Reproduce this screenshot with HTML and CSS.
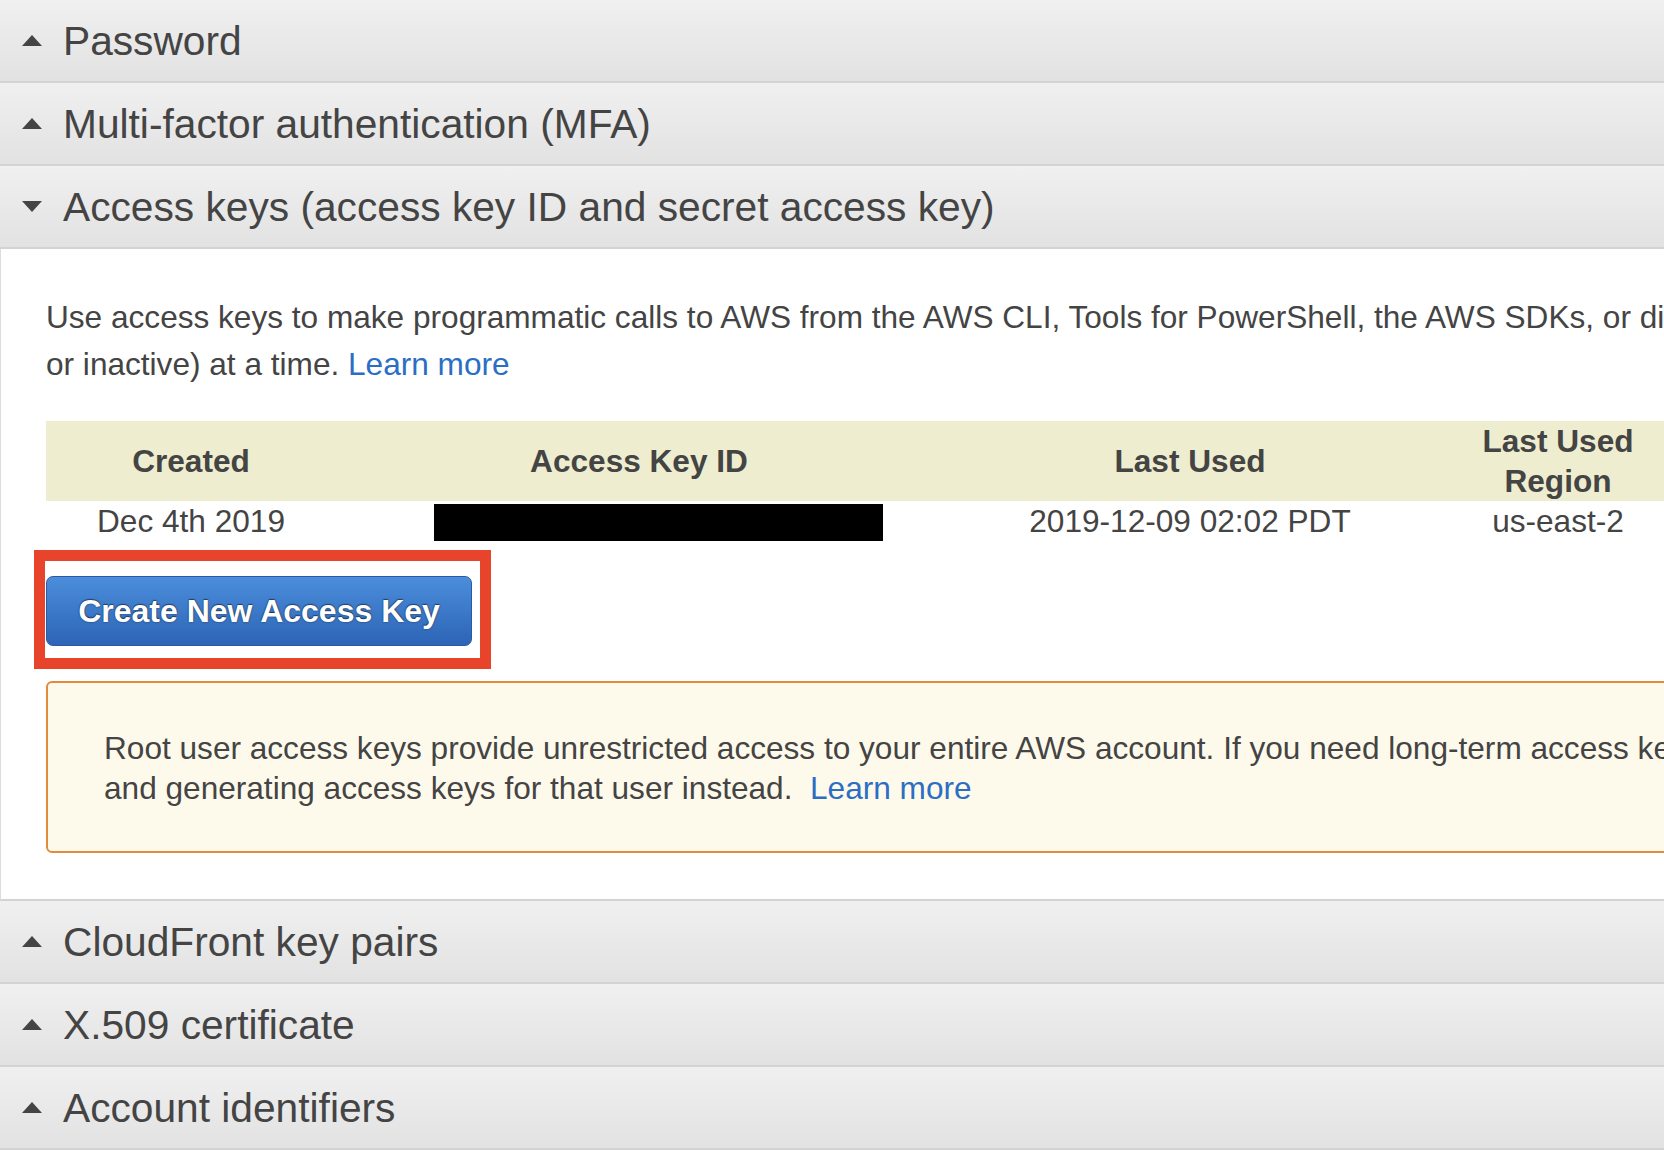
FILE: index.html
```html
<!DOCTYPE html>
<html lang="en">
<head>
<meta charset="utf-8">
<title>Your Security Credentials</title>
<link rel="stylesheet" href="styles.css">
</head>
<body>
<div class="page">
  <div class="section-head"><span class="tri tri-up"></span><span class="head-title">Password</span></div>
  <div class="section-head"><span class="tri tri-up"></span><span class="head-title">Multi-factor authentication (MFA)</span></div>
  <div class="section-head"><span class="tri tri-down"></span><span class="head-title">Access keys (access key ID and secret access key)</span></div>
  <div class="section-body">
    <p class="intro">Use access keys to make programmatic calls to AWS from the AWS CLI, Tools for PowerShell, the AWS SDKs, or direct AWS API calls. You can have a maximum of two access keys (active<br>or inactive) at a time. <a class="link" href="#">Learn more</a></p>
    <table class="keys">
      <colgroup>
        <col class="c1"><col class="c2"><col class="c3"><col class="c4"><col class="c5"><col class="c6">
      </colgroup>
      <thead>
        <tr><th>Created</th><th>Access Key ID</th><th>Last Used</th><th>Last Used Region</th><th>Last Used Service</th><th>Status</th></tr>
      </thead>
      <tbody>
        <tr><td>Dec 4th 2019</td><td class="keycell"><div class="redact"></div></td><td>2019-12-09 02:02 PDT</td><td>us-east-2</td><td>iam</td><td>Active</td></tr>
      </tbody>
    </table>
    <div class="highlight"><button class="btn-primary" type="button">Create New Access Key</button></div>
    <div class="warning">
      <p class="warning-text">Root user access keys provide unrestricted access to your entire AWS account. If you need long-term access keys, we recommend creating a new IAM user with limited permissions<br>and generating access keys for that user instead.&nbsp; <a class="link" href="#">Learn more</a></p>
    </div>
  </div>
  <div class="section-head"><span class="tri tri-up"></span><span class="head-title">CloudFront key pairs</span></div>
  <div class="section-head"><span class="tri tri-up"></span><span class="head-title">X.509 certificate</span></div>
  <div class="section-head"><span class="tri tri-up"></span><span class="head-title">Account identifiers</span></div>
</div>
</body>
</html>
```
FILE: styles.css
```css
html, body {
  margin: 0;
  padding: 0;
  background: #ffffff;
  overflow: hidden;
}
body {
  font-family: "Liberation Sans", Arial, Helvetica, sans-serif;
  color: #444444;
}
.page {
  width: 2300px;
}
.section-head {
  height: 81px;
  border-bottom: 2px solid #d3d3d3;
  background: linear-gradient(#f0f0f0, #e2e2e2);
  display: flex;
  align-items: center;
  padding-left: 22px;
}
.tri {
  width: 0;
  height: 0;
  border-left: 10px solid transparent;
  border-right: 10px solid transparent;
  margin-right: 21px;
}
.tri-up {
  border-bottom: 11px solid #444444;
}
.tri-down {
  border-top: 11px solid #444444;
}
.head-title {
  font-size: 40.7px;
  line-height: 48px;
  color: #444444;
}
.section-body {
  border-left: 1px solid #dddddd;
  border-bottom: 2px solid #d3d3d3;
  padding: 45px 0 46px 45px;
  background: #ffffff;
}
.intro {
  margin: 0;
  font-size: 31.6px;
  line-height: 47px;
  white-space: nowrap;
}
.link {
  color: #2b6ec4;
  text-decoration: none;
}
.keys {
  margin-top: 33px;
  border-collapse: collapse;
  border-spacing: 0;
  table-layout: fixed;
  width: 1900px;
}
.c1 { width: 290px; }
.c2 { width: 606px; }
.c3 { width: 496px; }
.c4 { width: 240px; }
.c5 { width: 160px; }
.c6 { width: 108px; }
.keys th {
  background: #eeedcf;
  font-size: 31.6px;
  font-weight: bold;
  line-height: 40px;
  height: 79px;
  padding: 0;
  text-align: center;
  color: #444444;
  vertical-align: middle;
}
.keys td {
  font-size: 31.6px;
  line-height: 40px;
  padding: 0;
  text-align: center;
  vertical-align: middle;
  color: #444444;
}
.keycell {
  text-align: left;
}
.redact {
  width: 449px;
  height: 37px;
  margin: 3px 0 0 98px;
  background: #000000;
}
.highlight {
  display: inline-block;
  margin: 9px 0 0 -12px;
  border: 11px solid #e8432b;
  padding: 15px 8px 12px 1px;
  line-height: 0;
}
.btn-primary {
  width: 426px;
  height: 70px;
  padding: 0;
  border: 1px solid #2a5aa6;
  border-radius: 7px;
  background: linear-gradient(#4b8edb, #2d64b6);
  color: #ffffff;
  font-family: "Liberation Sans", Arial, Helvetica, sans-serif;
  font-size: 32px;
  font-weight: bold;
  line-height: 40px;
  text-shadow: 0 0 2px rgba(0, 0, 0, 0.55), 0 -1px 1px rgba(0, 0, 0, 0.4);
  cursor: pointer;
}
.warning {
  margin-top: 12px;
  border: 2px solid #e38a3c;
  border-radius: 6px;
  background: #fefaeb;
  padding: 45px 0 43px 56px;
  width: 2000px;
}
.warning-text {
  margin: 0;
  font-size: 31.6px;
  line-height: 40px;
  white-space: nowrap;
}
```
